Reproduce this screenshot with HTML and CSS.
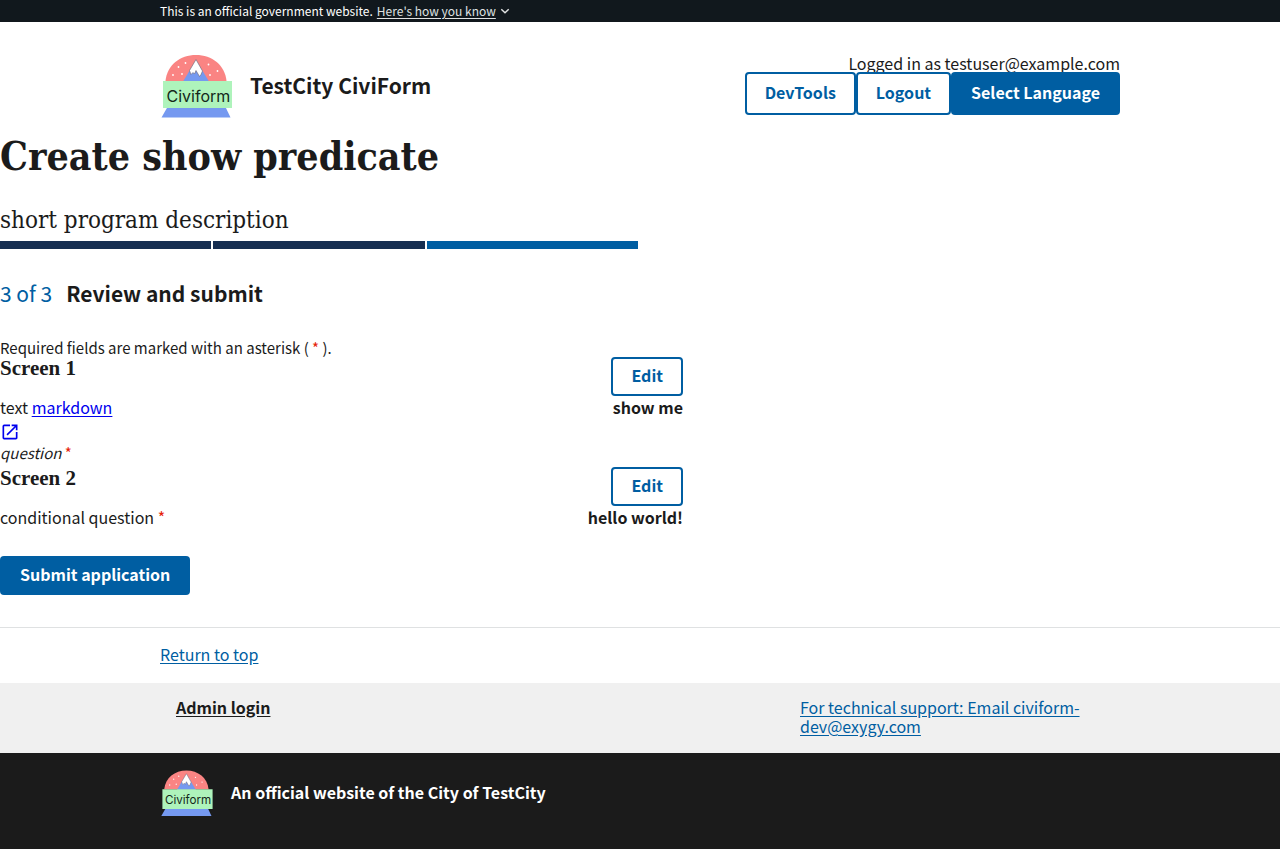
FILE: index.html
```html
<!DOCTYPE html>
<html lang="en">
<head>
<meta charset="utf-8">
<meta name="viewport" content="width=device-width, initial-scale=1">
<title>Create show predicate</title>
<link rel="stylesheet" href="styles.css">
</head>
<body>
<section class="banner" aria-label="Official government website">
  <div class="container banner-inner">
    <span>This is an official government website.</span>
    <button class="banner-button" type="button"><span>Here's how you know</span><svg width="10" height="8" viewBox="0 0 10 8" aria-hidden="true"><path d="M1.300 2.200 5 5.800 8.700 2.200" fill="none" stroke="currentColor" stroke-width="1.500"/></svg></button>
  </div>
</section>

<header class="container header">
  <a class="brand" href="#">
    <svg class="logo" viewBox="5 5 75 66" aria-hidden="true">
      <path d="M10.500 33C12 17 25 7 41 7s29 10 30.500 26z" fill="#fa8483"/>
      <path d="M28 33.500 41 12l13 21.500z" fill="#7599f0"/>
      <path d="M41 11.500 34.500 22.500l1.500 4 2-2 1.500 1.500 1.500-3.500 3.500 6 1.500-2 1.500-3.500z" fill="#fff" stroke="#6b6370" stroke-width=".6"/>
      <g fill="#fff"><circle cx="30.500" cy="15" r=".9"/><circle cx="23.500" cy="19" r=".9"/><circle cx="18" cy="27" r=".9"/><circle cx="27" cy="26" r=".9"/><circle cx="53.500" cy="16.500" r=".9"/><circle cx="62.500" cy="23" r=".9"/><circle cx="55" cy="27" r=".9"/></g>
      <path d="M12.500 59h58l5 10.500h-69z" fill="#7599f0"/>
      <path d="M8 33h69v27H8z" fill="#aef3bb"/>
      <text class="logo-text" x="11.500" y="53.500">Civiform</text>
    </svg>
    <span>TestCity CiviForm</span>
  </a>
  <div class="account">
    <div class="user">Logged in as testuser@example.com</div>
    <nav class="actions">
      <button class="button outline" type="button">DevTools</button>
      <button class="button outline" type="button">Logout</button>
      <button class="button" type="button">Select Language</button>
    </nav>
  </div>
</header>

<main>
  <h1>Create show predicate</h1>
  <p class="description">short program description</p>
  <div class="progress" aria-hidden="true"><span class="done"></span><span class="done"></span><span class="current"></span></div>
  <h2 class="step"><span class="count">3 of 3</span><span>Review and submit</span></h2>
  <p class="note">Required fields are marked with an asterisk ( <span class="required">*</span> ).</p>

  <section class="screen">
    <div class="row"><h3>Screen 1</h3><button class="button outline" type="button">Edit</button></div>
    <div class="row">
      <div class="question">
        <p>text <a href="#">markdown</a></p>
        <a class="external" href="#" aria-label="Opens in a new tab"><svg width="20" height="20" viewBox="0 0 24 24" aria-hidden="true"><path fill="currentColor" d="M19 19H5V5h7V3H5a2 2 0 0 0-2 2v14a2 2 0 0 0 2 2h14c1.100 0 2-.9 2-2v-7h-2v7zM14 3v2h3.590l-9.830 9.830 1.410 1.410L19 6.410V10h2V3h-7z"/></svg></a>
        <p class="hint"><em>question</em> <span class="required">*</span></p>
      </div>
      <strong>show me</strong>
    </div>
  </section>
  <section class="screen">
    <div class="row"><h3>Screen 2</h3><button class="button outline" type="button">Edit</button></div>
    <div class="row">
      <div class="question"><p>conditional question <span class="required">*</span></p></div>
      <strong>hello world!</strong>
    </div>
  </section>
  <button class="button submit" type="submit">Submit application</button>
</main>

<footer>
  <div class="return"><div class="container"><a class="link" href="#">Return to top</a></div></div>
  <div class="links">
    <div class="container links-inner">
      <a class="admin" href="#">Admin login</a>
      <a class="link support" href="#">For technical support: Email civiform-dev@exygy.com</a>
    </div>
  </div>
  <div class="identity">
    <div class="container identity-inner">
      <svg class="logo small" viewBox="5 5 75 66" aria-hidden="true">
        <path d="M10.500 33C12 17 25 7 41 7s29 10 30.500 26z" fill="#fa8483"/>
        <path d="M28 33.500 41 12l13 21.500z" fill="#7599f0"/>
        <path d="M41 11.500 34.500 22.500l1.500 4 2-2 1.500 1.500 1.500-3.500 3.500 6 1.500-2 1.500-3.500z" fill="#fff" stroke="#6b6370" stroke-width=".6"/>
        <g fill="#fff"><circle cx="30.500" cy="15" r=".9"/><circle cx="23.500" cy="19" r=".9"/><circle cx="18" cy="27" r=".9"/><circle cx="27" cy="26" r=".9"/><circle cx="53.500" cy="16.500" r=".9"/><circle cx="62.500" cy="23" r=".9"/><circle cx="55" cy="27" r=".9"/></g>
        <path d="M12.500 59h58l5 10.500h-69z" fill="#7599f0"/>
        <path d="M8 33h69v27H8z" fill="#aef3bb"/>
        <text class="logo-text" x="11.500" y="53.500">Civiform</text>
      </svg>
      <strong>An official website of the City of TestCity</strong>
    </div>
  </div>
</footer>
</body>
</html>
```
FILE: styles.css
```css
* { box-sizing: border-box; }
body {
  margin: 0;
  display: flex;
  flex-direction: column;
  min-height: 100vh;
  color: #1b1b1b;
  font: 16px/22px "Noto Sans CJK SC", "Open Sans", sans-serif;
}
h1, h2, h3, p { margin: 0; }
button { font: inherit; cursor: pointer; }
.container { width: 100%; max-width: 1024px; margin: 0 auto; padding-left: 32px; padding-right: 32px; }

.banner { background: #11181d; color: #fff; font-size: 12px; line-height: 22px; }
.banner-inner { display: flex; gap: 4px; }
.banner-button { display: flex; align-items: center; gap: 4px; padding: 0; border: 0; background: none; color: #dfe1e2; }
.banner-button span { text-decoration: underline; text-underline-offset: 2px; }

.header { display: flex; justify-content: space-between; padding-top: 31px; }
.brand { display: flex; align-items: center; gap: 15px; height: 66px; color: inherit; font-size: 21px; font-weight: 700; text-decoration: none; }
.brand span { padding-bottom: 2px; }
.logo { width: 75px; height: 66px; flex: none; }
.logo-text { font-family: "Inter", "Liberation Sans", sans-serif; font-size: 16px; font-weight: 400; fill: #14281a; }
.account { display: flex; flex-direction: column; align-items: flex-end; }
.user { height: 19px; line-height: 20px; }
.actions { display: flex; }

.button { height: 39px; padding: 0 20px 4px; border: 0; border-radius: 4px; background: #005ea2; color: #fff; font-weight: 700; line-height: 16px; white-space: nowrap; }
.button.outline { border: 2px solid #005ea2; background: #fff; color: #005ea2; padding: 0 18px 4px; }
.actions .button { height: 43px; }

main { display: flex; flex-direction: column; align-items: flex-start; padding-bottom: 32px; }
h1 { padding-top: 10px; font: 700 39px/54px "DejaVu Serif Condensed", "DejaVu Serif", serif; }
.description { margin-top: 20px; font: 24px/34px "DejaVu Serif Condensed", "DejaVu Serif", serif; }
.progress { display: flex; gap: 2px; width: 50%; padding-right: 2px; margin-top: 4px; }
.progress span { flex: 1; height: 8px; }
.done { background: #162e51; }
.current { background: #005ea2; }
.step { display: flex; gap: 14px; margin-top: 28px; font-size: 21px; line-height: 32px; }
.count { color: #005ea2; font-weight: 400; }
.note { margin-top: 30px; font-size: 15px; line-height: 18px; }
.required { color: #e52207; }
.screen { width: 100%; max-width: 683px; }
.row { display: flex; justify-content: space-between; align-items: flex-start; }
h3 { font: 700 21px/22px "Liberation Serif", serif; }
.question a { color: #0000ee; text-underline-offset: 2px; }
.question .external { display: flex; align-items: center; height: 22px; margin-top: 3px; }
.hint { padding-bottom: 4px; font-size: 15px; line-height: 20px; }
.submit { margin-top: 28px; }

footer { display: flex; flex-direction: column; flex: 1; }
.return { padding: 15px 0 18px; border-top: 1px solid #dfe1e2; }
.link { color: #005ea2; text-underline-offset: 2px; }
.return .container { display: flex; }
.links { background: #f0f0f0; }
.links-inner { display: grid; grid-template-columns: 2fr 1fr; padding-top: 15px; padding-bottom: 17px; line-height: 19px; }
.return .link { line-height: 22px; }
.admin { justify-self: start; align-self: start; margin-left: 16px; color: inherit; font-weight: 700; text-underline-offset: 2px; }
.support { max-width: 288px; }
.identity { flex: 1; background: #1b1b1b; color: #fff; padding: 16px 0 32px; }
.identity-inner { display: flex; align-items: center; gap: 16px; }
.identity strong { padding-bottom: 2px; }
.logo.small { width: 55px; height: 48px; }
```
